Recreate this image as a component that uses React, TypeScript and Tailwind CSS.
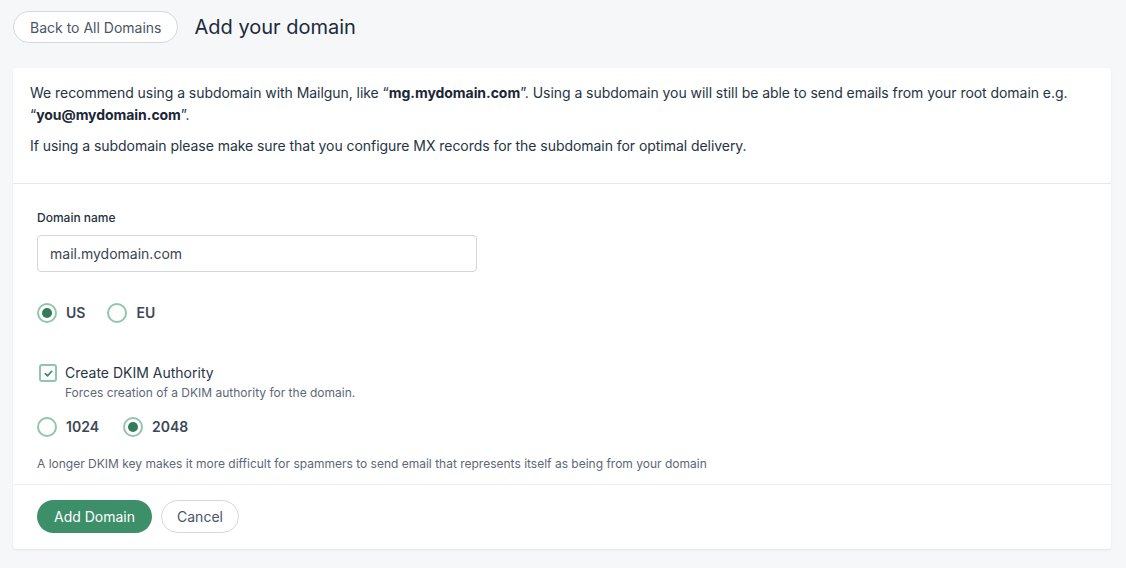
import { useState } from 'react';

function Radio({ checked, label, onClick }: { checked: boolean; label: string; onClick: () => void }) {
  return (
    <button type="button" onClick={onClick} className="flex items-center gap-[9px]">
      <span className="w-[20px] h-[20px] rounded-full border-2 border-[#92c5ad] flex items-center justify-center">
        {checked && <span className="w-[10px] h-[10px] rounded-full bg-[#357a5a]" />}
      </span>
      <span className="text-[14px] leading-5 font-semibold text-[#3d4757]">{label}</span>
    </button>
  );
}

export default function App() {
  const [region, setRegion] = useState('US');
  const [dkim, setDkim] = useState(true);
  const [keySize, setKeySize] = useState('2048');

  return (
    <div className="min-h-screen bg-[#f5f7f8] pl-[13px] pr-[15px] pt-[11px] text-[#1f2b3b]" style={{ fontFamily: 'Inter, "Noto Sans", sans-serif' }}>
      {/* Page header */}
      <div className="flex items-center gap-[16px]">
        <button className="h-[32px] px-[16px] rounded-full border border-[#d4d8dc] bg-white text-[14px] text-[#4a5566]">
          Back to All Domains
        </button>
        <h1 className="text-[20px] leading-7 text-[#1d2a3c]">Add your domain</h1>
      </div>

      <div className="mt-[25px] bg-white rounded-[3px] shadow-[0_1px_2px_rgba(0,0,0,0.08)]">
        {/* Intro */}
        <div className="px-[17px] pt-[14px] pb-[26px] border-b border-[#e5e8eb] text-[14px] leading-[22px] tracking-[-0.05px] text-[#253444]">
          <p className="mb-[9px]">
            We recommend using a subdomain with Mailgun, like “<b className="font-bold text-[#1b2636]">mg.mydomain.com</b>”. Using a subdomain you will still be able to send emails from your root domain e.g. “<b className="font-bold text-[#1b2636]">you@mydomain.com</b>”.
          </p>
          <p>If using a subdomain please make sure that you configure MX records for the subdomain for optimal delivery.</p>
        </div>

        {/* Form */}
        <div className="px-[24px] pt-[26px] pb-[12px] border-b border-[#eceef0]">
          <label className="block text-[12px] leading-4 font-medium text-[#26313f]">Domain name</label>
          <input
            defaultValue="mail.mydomain.com"
            className="mt-[9px] w-[440px] h-[37px] px-[12px] rounded-[4px] border border-[#d3d6da] text-[14px] text-[#3a4453] outline-none"
          />

          <div className="mt-[31px] flex items-center gap-[22px]">
            <Radio checked={region === 'US'} label="US" onClick={() => setRegion('US')} />
            <Radio checked={region === 'EU'} label="EU" onClick={() => setRegion('EU')} />
          </div>

          <div className="mt-[40px] flex gap-[8px]">
            <button
              type="button"
              onClick={() => setDkim(!dkim)}
              className="mt-[1px] ml-[2px] w-[18px] h-[18px] rounded-[3px] border-2 border-[#92c5ad] flex items-center justify-center"
            >
              {dkim && (
                <svg width="11" height="11" viewBox="0 0 12 12" fill="none" stroke="#3b8a63" strokeWidth="1.8" strokeLinecap="round" strokeLinejoin="round">
                  <path d="M2.5 6.2l2.4 2.4 4.6-5" />
                </svg>
              )}
            </button>
            <div>
              <p className="text-[14px] leading-5 text-[#2a3444]">Create DKIM Authority</p>
              <p className="mt-[2px] text-[12px] leading-4 text-[#5d6776]">Forces creation of a DKIM authority for the domain.</p>
            </div>
          </div>

          <div className="mt-[16px] flex items-center gap-[24px]">
            <Radio checked={keySize === '1024'} label="1024" onClick={() => setKeySize('1024')} />
            <Radio checked={keySize === '2048'} label="2048" onClick={() => setKeySize('2048')} />
          </div>

          <p className="mt-[19px] text-[12px] leading-4 text-[#5d6776]">
            A longer DKIM key makes it more difficult for spammers to send email that represents itself as being from your domain
          </p>
        </div>

        {/* Actions */}
        <div className="px-[24px] pt-[15px] pb-[16px] flex items-center gap-[9px]">
          <button className="h-[33px] px-[17px] rounded-full bg-[#3d8f69] text-white text-[14px]">Add Domain</button>
          <button className="h-[33px] px-[15px] rounded-full border border-[#d4d8dc] bg-white text-[14px] text-[#4a5566]">Cancel</button>
        </div>
      </div>
    </div>
  );
}
